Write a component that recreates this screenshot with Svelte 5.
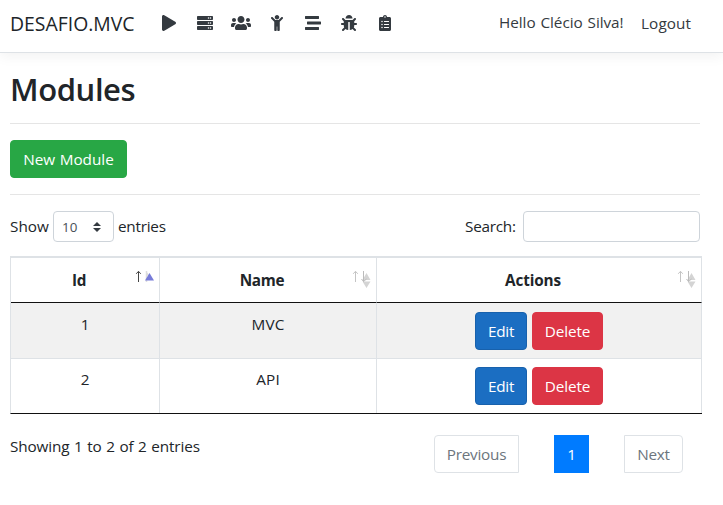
<script>
  const dots = (y) =>
    `M432 ${y}a24 24 0 1 0 0 48 24 24 0 0 0 0-48zM368 ${y}a24 24 0 1 0 0 48 24 24 0 0 0 0-48z`;
  const slab = (y) =>
    `M480 ${y + 128}H32c-17.7 0-32-14.3-32-32v-64c0-17.7 14.3-32 32-32h448c17.7 0 32 14.3 32 32v64c0 17.7-14.3 32-32 32z`;

  const icons = [
    { name: 'Play', w: 448, d: 'M424.4 214.7L72.4 6.6C43.8-10.3 0 6.1 0 47.9V464c0 37.5 40.7 60.1 72.4 41.3l352-208c31.4-18.5 31.5-64.1 0-82.6z' },
    { name: 'Systems', w: 512, d: [32, 192, 352].map((y) => slab(y) + dots(y + 40)).join('') },
    { name: 'Users', w: 640, d: 'M96 224c35.3 0 64-28.7 64-64s-28.7-64-64-64-64 28.7-64 64 28.7 64 64 64zm448 0c35.3 0 64-28.7 64-64s-28.7-64-64-64-64 28.7-64 64 28.7 64 64 64zm32 32h-64c-17.6 0-33.5 7.1-45.1 18.6 40.3 22.1 68.9 62 75.1 109.4h66c17.7 0 32-14.3 32-32v-32c0-35.3-28.7-64-64-64zm-256 0c61.9 0 112-50.1 112-112S381.9 32 320 32 208 82.1 208 144s50.1 112 112 112zm76.8 32h-8.3c-20.8 10-43.9 16-68.5 16s-47.6-6-68.5-16h-8.3C179.6 288 128 339.6 128 403.2V432c0 26.5 21.5 48 48 48h288c26.5 0 48-21.5 48-48v-28.8c0-63.6-51.6-115.2-115.2-115.2zm-223.7-13.4C161.5 263.1 145.6 256 128 256H64c-35.3 0-64 28.7-64 64v32c0 17.7 14.3 32 32 32h65.9c6.3-47.4 34.9-87.3 75.2-109.4z' },
    { name: 'Person', w: 384, d: 'M120 72c0-39.765 32.235-72 72-72s72 32.235 72 72c0 39.764-32.235 72-72 72s-72-32.236-72-72zm254.627 1.373c-12.496-12.497-32.758-12.497-45.254 0L242.745 160H141.254L54.627 73.373c-12.496-12.497-32.758-12.497-45.254 0-12.497 12.497-12.497 32.758 0 45.255L104 213.254V480c0 17.673 14.327 32 32 32h16c17.673 0 32-14.327 32-32V368h16v112c0 17.673 14.327 32 32 32h16c17.673 0 32-14.327 32-32V213.254l94.627-94.627c12.497-12.497 12.497-32.757 0-45.254z' },
    { name: 'Modules', w: 512, d: 'M16 128h416c8.84 0 16-7.16 16-16V48c0-8.84-7.16-16-16-16H16C7.16 32 0 39.16 0 48v64c0 8.84 7.16 16 16 16zm480 80H80c-8.84 0-16 7.16-16 16v64c0 8.84 7.16 16 16 16h416c8.84 0 16-7.16 16-16v-64c0-8.84-7.16-16-16-16zm-64 176H16c-8.84 0-16 7.16-16 16v64c0 8.84 7.16 16 16 16h416c8.84 0 16-7.16 16-16v-64c0-8.84-7.16-16-16-16z' },
    { name: 'Bugs', w: 512, d: 'M511.988 288.9c-.478 17.43-15.217 31.1-32.653 31.1H424v16c0 21.864-4.882 42.584-13.6 61.145l60.228 60.228c12.496 12.497 12.496 32.758 0 45.255-12.498 12.497-32.759 12.496-45.256 0l-54.736-54.736C345.886 467.965 314.351 480 280 480V236c0-6.627-5.373-12-12-12h-24c-6.627 0-12 5.373-12 12v244c-34.351 0-65.886-12.035-90.636-32.108l-54.736 54.736c-12.498 12.497-32.759 12.496-45.256 0-12.496-12.497-12.496-32.758 0-45.255l60.228-60.228C92.882 378.584 88 357.864 88 336v-16H32.666C15.23 320 .491 306.33.013 288.9-.484 270.816 14.028 256 32 256h56v-58.745l-46.628-46.628c-12.496-12.497-12.496-32.758 0-45.255 12.498-12.497 32.758-12.497 45.256 0L141.255 160h229.489l54.627-54.627c12.498-12.497 32.758-12.497 45.256 0 12.496 12.497 12.496 32.758 0 45.255L424 197.255V256h56c17.972 0 32.484 14.816 31.988 32.9zM257 0c-61.856 0-112 50.144-112 112h224C369 50.144 318.856 0 257 0z' },
    { name: 'Tests', w: 384, d: 'M336 64h-80c0-35.3-28.7-64-64-64s-64 28.7-64 64H48C21.5 64 0 85.5 0 112v352c0 26.5 21.5 48 48 48h288c26.5 0 48-21.5 48-48V112c0-26.5-21.5-48-48-48zM96 376a24 24 0 1 0 0 48 24 24 0 0 0 0-48zm0-96a24 24 0 1 0 0 48 24 24 0 0 0 0-48zm0-96a24 24 0 1 0 0 48 24 24 0 0 0 0-48zM192 40a24 24 0 1 0 0 48 24 24 0 0 0 0-48zM168 384h144q8 0 8 8v16q0 8-8 8H168q-8 0-8-8v-16q0-8 8-8zm0-96h144q8 0 8 8v16q0 8-8 8H168q-8 0-8-8v-16q0-8 8-8zm0-96h144q8 0 8 8v16q0 8-8 8H168q-8 0-8-8v-16q0-8 8-8z' }
  ];

  const columns = [
    { label: 'Id', cls: 'id', sorted: true },
    { label: 'Name', cls: 'name', sorted: false },
    { label: 'Actions', cls: 'actions', sorted: false }
  ];
  const rows = [
    { id: 1, name: 'MVC' },
    { id: 2, name: 'API' }
  ];
</script>

<header>
  <span class="brand">DESAFIO.MVC</span>
  <nav>
    {#each icons as icon}
      <a href="#top" aria-label={icon.name}>
        <svg viewBox="0 0 {icon.w} 512" width={icon.w / 32} height="16">
          <path d={icon.d} fill-rule="evenodd" />
        </svg>
      </a>
    {/each}
  </nav>
  <span class="hello">Hello Clécio Silva!</span>
  <span class="logout">Logout</span>
</header>

<main>
  <h1>Modules</h1>
  <hr />
  <button class="btn new"><span>New Module</span></button>
  <hr />

  <div class="tools">
    <span class="show">Show</span>
    <div class="select">
      <span>10</span>
      <svg viewBox="0 0 4 5" width="8" height="10"><path d="M2 0L0 2h4zm0 5L0 3h4z" /></svg>
    </div>
    <span class="entries">entries</span>
    <span class="search">Search:</span>
    <input type="text" aria-label="Search" />
  </div>

  <table>
    <thead>
      <tr>
        {#each columns as col}
          <th class={col.cls}>
            <div class="head">
              <span>{col.label}</span>
              <svg class="sort" width="20" height="20" viewBox="0 0 20 20">
                {#if col.sorted}
                  <path d="M12.5 3v11M13 5l3 6" stroke="#ddd" stroke-width="1.5" />
                  <path d="M4.5 14V3.5M2.2 5.8l2.3-2.5 2.3 2.5" fill="none" stroke="#444" />
                  <path d="M15.5 5L11 12.5h9z" fill="#777bd8" />
                {:else}
                  <path d="M4.5 14V3.5M2.2 5.8l2.3-2.5 2.3 2.5" fill="none" stroke="#c4c4c4" />
                  <path d="M15.5 5l-4 7h8zm0 15l-4-6.500h8z" fill="#d4d4d4" />
                  <path d="M12.500 3v10.500M10.500 11l2 2.500 3-2.500" fill="none" stroke="#bbb" />
                {/if}
              </svg>
            </div>
          </th>
        {/each}
      </tr>
    </thead>
    <tbody>
      {#each rows as row}
        <tr>
          <td>{row.id}</td>
          <td><span class="code">{row.name}</span></td>
          <td>
            <div class="pair">
              <button class="btn edit"><span>Edit</span></button>
              <button class="btn delete"><span>Delete</span></button>
            </div>
          </td>
        </tr>
      {/each}
    </tbody>
  </table>

  <footer>
    <span class="info">Showing 1 to 2 of 2 entries</span>
    <div class="pages">
      <span class="page prev">Previous</span>
      <span class="page current">1</span>
      <span class="page next">Next</span>
    </div>
  </footer>
</main>

<style>
  :global(body) {
    margin: 0;
    background: #fff;
    color: #212529;
    font: 15.3px/24px 'Open Sans', 'Noto Sans', sans-serif;
    letter-spacing: -0.25px;
    overflow: hidden;
  }
  * { box-sizing: border-box; }
  span { white-space: nowrap; }

  header {
    height: 53px;
    display: flex;
    align-items: flex-start;
    padding: 10px 32px 0 10px;
    border-bottom: 1px solid #dee2e6;
    box-shadow: 0 4px 12px rgba(0, 0, 0, 0.05);
  }
  .brand { width: 151px; padding-top: 2px; font-size: 19.4px; letter-spacing: 0; }
  nav { display: flex; padding-top: 5px; fill: #343a40; }
  nav a { display: flex; justify-content: center; width: 36px; }
  nav a:first-child { width: 35px; margin-left: -9.5px; }
  nav svg { display: block; }
  .hello { margin-left: auto; width: 142px; color: #343a40; letter-spacing: -0.05px; word-spacing: 1px; }
  .logout { width: 50px; padding-top: 1px; color: #343a40; letter-spacing: 0.1px; }

  main { padding: 17px 23px 0 10px; }
  h1 {
    margin: 0 0 14px;
    font-size: 31px;
    line-height: 39px;
    font-weight: 600;
    letter-spacing: -0.4px;
  }
  hr { margin: 0 0 16px; border: 0; border-top: 1px solid #e5e5e5; width: 690px; }

  .btn {
    display: block;
    height: 38px;
    padding: 0;
    border: 1px solid;
    border-radius: 4px;
    color: #fff;
    font: inherit;
    letter-spacing: inherit;
    text-align: center;
  }
  .new {
    width: 117px;
    margin-bottom: 16px;
    background: #28a745;
    border-color: #28a745;
    letter-spacing: 0;
    word-spacing: 0.5px;
  }
  .edit { width: 52px; background: #1b6ec2; border-color: #1861ac; }
  .delete { width: 71px; background: #dc3545; border-color: #dc3545; letter-spacing: -0.1px; }

  .tools { display: flex; align-items: center; height: 31px; margin-bottom: 14px; }
  .tools > span { margin-top: -2px; }
  .show { width: 43px; letter-spacing: 0; }
  .select {
    width: 61px;
    height: 31px;
    display: flex;
    align-items: center;
    justify-content: space-between;
    padding: 1px 12px 0 8px;
    border: 1px solid #ced4da;
    border-radius: 4px;
    font-size: 13.4px;
    letter-spacing: 0;
    color: #495057;
  }
  .select svg { fill: #343a40; }
  .entries { margin-left: 4px; }
  .search { margin-left: auto; width: 58px; }
  input { width: 177px; height: 31px; border: 1px solid #ced4da; border-radius: 4px; background: #fff; }

  table {
    width: 692px;
    table-layout: fixed;
    border-collapse: separate;
    border-spacing: 0;
    border-left: 1px solid #dee2e6;
    border-bottom: 1px solid #111;
    text-align: center;
  }
  th, td { padding: 0; border-right: 1px solid #dee2e6; }
  th { height: 47px; border-top: 2px solid #dee2e6; border-bottom: 1px solid #111; font-weight: 700; }
  .id { width: 149px; }
  .name { width: 217px; }
  .head { display: flex; align-items: center; height: 44px; }
  .head span { flex: 1; padding-left: 11px; margin-top: -1px; }
  .actions span { letter-spacing: -0.1px; }
  .sort { margin: 0 5px 5px -2px; }
  td { height: 54px; padding-top: 9px; vertical-align: top; line-height: 24px; }
  .code { letter-spacing: 0.2px; }
  tbody tr:first-child td { height: 56px; background: #f1f1f1; border-bottom: 1px solid #dee2e6; }
  tbody tr:last-child td { padding-top: 8px; }
  .pair { display: flex; justify-content: center; gap: 5px; }

  footer { display: flex; justify-content: space-between; padding-top: 21px; }
  .info { margin-top: -1px; letter-spacing: -0.12px; word-spacing: 0.7px; }
  .pages { display: flex; gap: 35px; margin-right: 17px; }
  .page {
    height: 38px;
    padding-top: 6px;
    border: 1px solid #dee2e6;
    text-align: center;
    color: #6c757d;
  }
  .prev { width: 85px; border-radius: 4px 0 0 4px; }
  .current { width: 35px; background: #007bff; border-color: #007bff; color: #fff; }
  .next { width: 59px; border-radius: 0 4px 4px 0; }
</style>
